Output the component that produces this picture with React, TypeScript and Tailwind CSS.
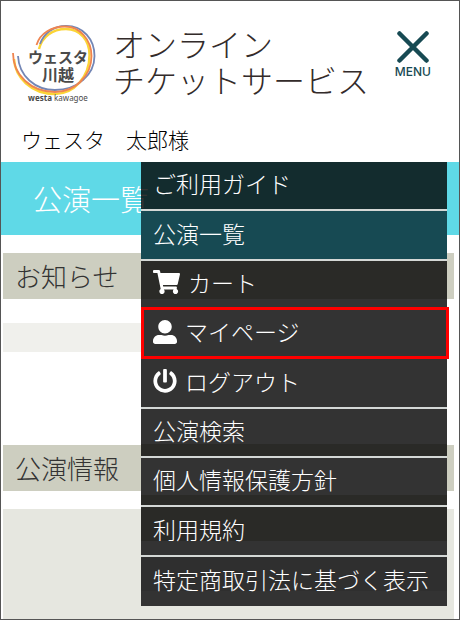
import { useState } from 'react';
import clsx from 'clsx';
import { FaPowerOff, FaShoppingCart, FaUserAlt } from 'react-icons/fa';
import type { IconType } from 'react-icons';

interface MenuItem {
  label: string;
  icon?: IconType;
  iconClass?: string;
  background: string;
  selected?: boolean;
}

const MENU_ITEMS: MenuItem[] = [
  { label: 'ご利用ガイド', background: 'bg-black/80' },
  { label: '公演一覧', background: 'bg-[#174a53]' },
  {
    label: 'カート',
    icon: FaShoppingCart,
    iconClass: 'w-[27px]',
    background: 'bg-linear-to-b from-[#2a2a27] from-80% to-[#333333] to-80%',
  },
  { label: 'マイページ', icon: FaUserAlt, iconClass: 'w-6', background: 'bg-[#333333]', selected: true },
  { label: 'ログアウト', icon: FaPowerOff, iconClass: 'w-6', background: 'bg-[#333333]' },
  { label: '公演検索', background: 'bg-linear-to-b from-[#333333] from-75% to-[#2a2a27] to-75%' },
  { label: '個人情報保護方針', background: 'bg-linear-to-b from-[#333333] from-78% to-[#2a2a27] to-78%' },
  { label: '利用規約', background: 'bg-linear-to-b from-[#2a2a27] from-70% to-[#333333] to-70%' },
  { label: '特定商取引法に基づく表示', background: 'bg-linear-to-b from-[#2f2f2f] from-70% to-[#333333] to-70%' },
];

function Logo() {
  return (
    <svg viewBox="0 0 86 80" className="h-20 w-[86px] shrink-0" role="img" aria-label="ウェスタ川越">
      <g fill="none" strokeWidth="1.8">
        <path
          stroke="#fbd436"
          strokeWidth="2.4"
          d="M28 24 C31 12 41 4 55 4 C69 4 78.500 15 78.500 30 C78.500 52 63 69 44 69 C20 69 4 52 3 34"
        />
        <path
          stroke="#7386b5"
          d="M29 19 C33 8 43 0.900 55 0.900 C72 0.900 83.500 14 83.500 31 C83.500 50 66 65 44 65 C24 65 8 51 7 31"
        />
        <path
          stroke="#ef8450"
          d="M25.500 20 C29 8 41 1.500 54 1.500 C69 1.500 80.500 15 80.500 31 C80.500 51 64 67 44 67 C20 67 2 50 2 28"
        />
      </g>
      <g fill="#4a4a4a" textAnchor="middle" className="font-['Noto_Sans_CJK_JP',sans-serif] font-bold">
        <text x="47" y="38" fontSize="15">
          ウェスタ
        </text>
        <text x="47" y="56" fontSize="16">
          川越
        </text>
        <text x="47" y="76" fontSize="8" className="font-['Noto_Sans',sans-serif]">
          westa <tspan fontWeight="400">kawagoe</tspan>
        </text>
      </g>
    </svg>
  );
}

function SectionHeading({ children }: { children: string }) {
  return <h2 className="mr-[5px] ml-[2px] bg-[#cdcec0] px-3 text-[26px] leading-[46px] text-[#333333]">{children}</h2>;
}

function MenuRow({ item }: { item: MenuItem }) {
  const Icon = item.icon;
  return (
    <li className={clsx('relative border-b-2 border-[#d4d8d6] last:border-b-0', item.background)}>
      <a href="#" className="flex h-full items-center gap-2 px-3 pb-1 whitespace-nowrap">
        {Icon && <Icon className={clsx('h-6 shrink-0', item.iconClass)} />}
        {item.label}
      </a>
      {item.selected && (
        <span className="pointer-events-none absolute -top-[3px] -right-[2px] -bottom-[2px] left-0 border-3 border-[#ff0000]" />
      )}
    </li>
  );
}

export default function App() {
  const [menuOpen, setMenuOpen] = useState(true);

  return (
    <div className="flex min-h-screen flex-col border border-[#555555] bg-white font-['Noto_Sans_CJK_JP',sans-serif] font-light">
      <header className="pt-6 pb-2">
        <div className="flex items-start pr-7 pl-[10px]">
          <Logo />
          <h1 className="ml-4 flex-1 text-[32px] leading-9 whitespace-nowrap text-[#332b2a]">
            オンライン
            <br />
            チケットサービス
          </h1>
          <button
            type="button"
            aria-expanded={menuOpen}
            onClick={() => setMenuOpen(!menuOpen)}
            className="flex flex-col items-center pt-[6px] text-[#174a53]"
          >
            <svg viewBox="0 0 32 32" className="h-8 w-8" fill="none" stroke="currentColor" strokeWidth="4.5" strokeLinecap="round">
              <path d="M2.500 2.500 L29.500 29.500 M29.500 2.500 L2.500 29.500" />
            </svg>
            <span className="font-['Inter',sans-serif] text-[12px] leading-[18px] font-medium">MENU</span>
          </button>
        </div>
        <p className="mt-5 px-5 text-[21px] leading-7 text-black">ウェスタ　太郎様</p>
      </header>

      <main className="relative mt-px flex flex-1 flex-col">
        <div className="bg-[#5fd9e7] px-8 text-[29px] leading-[73px] text-white">公演一覧</div>

        <div className="mt-[18px]">
          <SectionHeading>お知らせ</SectionHeading>
        </div>
        <div className="mt-6 mr-5 ml-[2px] h-[29px] bg-[#f0f0ec]" />

        <div className="mt-[93px]">
          <SectionHeading>公演情報</SectionHeading>
        </div>
        <div className="mt-[18px] mr-[5px] ml-[2px] flex-1 bg-[#e6e7e0]" />

        {menuOpen && (
          <nav className="absolute top-0 right-3 w-[306px]">
            <ul className="grid h-[444px] auto-rows-fr text-[23px] text-white">
              {MENU_ITEMS.map((item) => (
                <MenuRow key={item.label} item={item} />
              ))}
            </ul>
          </nav>
        )}
      </main>
    </div>
  );
}
